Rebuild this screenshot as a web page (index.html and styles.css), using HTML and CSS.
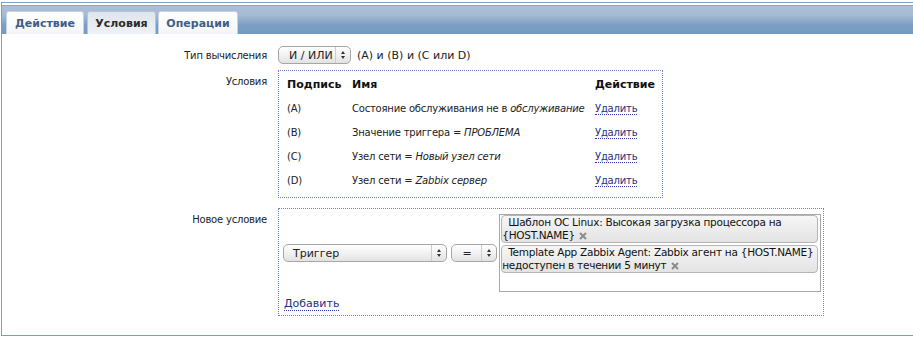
FILE: index.html
```html
<!DOCTYPE html>
<html lang="ru">
<head>
<meta charset="utf-8">
<link rel="stylesheet" href="styles.css">
</head>
<body>
<div class="frame">
  <div class="header">
    <div class="tabs">
      <div class="tab t1">Действие</div>
      <div class="tab t2 active">Условия</div>
      <div class="tab t3">Операции</div>
    </div>
  </div>
  <div class="form">
    <div class="row row-calc">
      <div class="label">Тип вычисления</div>
      <div class="value inline">
        <div class="select sel-calc"><span class="sel-text">И / ИЛИ</span><span class="sel-arrow"></span></div>
        <span class="formula">(A) и (B) и (C или D)</span>
      </div>
    </div>
    <div class="row row-cond">
      <div class="label">Условия</div>
      <div class="value">
        <div class="dotbox conds">
          <table class="ctable">
            <thead>
              <tr><th class="c1">Подпись</th><th class="c2">Имя</th><th class="c3">Действие</th></tr>
            </thead>
            <tbody>
              <tr><td>(A)</td><td>Состояние обслуживания не в <i>обслуживание</i></td><td><a class="link">Удалить</a></td></tr>
              <tr><td>(B)</td><td>Значение триггера = <i>ПРОБЛЕМА</i></td><td><a class="link">Удалить</a></td></tr>
              <tr><td>(C)</td><td>Узел сети = <i>Новый узел сети</i></td><td><a class="link">Удалить</a></td></tr>
              <tr><td>(D)</td><td>Узел сети = <i>Zabbix сервер</i></td><td><a class="link">Удалить</a></td></tr>
            </tbody>
          </table>
        </div>
      </div>
    </div>
    <div class="row row-new">
      <div class="label">Новое условие</div>
      <div class="value">
        <div class="dotbox newbox">
          <div class="newline">
            <div class="select sel-trig"><span class="sel-text">Триггер</span><span class="sel-arrow"></span></div>
            <div class="select sel-eq"><span class="sel-text eq">=</span><span class="sel-arrow"></span></div>
            <div class="multi">
              <div class="chip">Шаблон ОС Linux: Высокая загрузка процессора на {HOST.NAME} <svg class="x" width="8" height="8" viewBox="0 0 8 8"><path d="M1 1L7 7M7 1L1 7" stroke="#8c8c8c" stroke-width="2"/></svg></div>
              <div class="chip">Template App Zabbix Agent: Zabbix агент на {HOST.NAME} недоступен в течении 5 минут <svg class="x" width="8" height="8" viewBox="0 0 8 8"><path d="M1 1L7 7M7 1L1 7" stroke="#8c8c8c" stroke-width="2"/></svg></div>
            </div>
          </div>
          <div class="addline"><a class="link">Добавить</a></div>
        </div>
      </div>
    </div>
  </div>
</div>
</body>
</html>
```

FILE: styles.css
```css
* { box-sizing: border-box; }
body {
  margin: 0;
  background: #fff;
  font-family: "DejaVu Sans", Verdana, sans-serif;
  font-size: 10px;
  letter-spacing: -0.2px;
  color: #111;
}
.frame {
  margin: 2px 0 0 1px;
  width: 930px;
  height: 334px;
  border: 1px solid #7f9dc0;
  border-right: none;
}
.header {
  border-top: 2px solid #fff;
  height: 31px;
  background: linear-gradient(to bottom, #8ea8c6 0, #8ea8c6 1px, #abc0d7 1px, #a4bbd4 10px, #7c9fc4 20px, #749ac0 100%);
  padding: 5px 0 0 4px;
}
.tabs { display: flex; height: 100%; align-items: flex-end; }
.tab {
  height: 23px;
  display: flex;
  align-items: center;
  justify-content: center;
  font-weight: bold;
  font-size: 11px;
  letter-spacing: 0;
  color: #3f5f87;
  background: linear-gradient(to bottom, #ffffff, #f2f5f8);
  border: 1px solid #c5d3e2;
  border-bottom: none;
  border-radius: 3px 3px 0 0;
}
.t1 { width: 78px; }
.t2 { width: 69px; margin-left: 3px; }
.t3 { width: 80px; margin-left: 2px; }
.tab.active {
  color: #2b2b2b;
  background: linear-gradient(to bottom, #dfe5ec, #eef2f6);
  border-color: #b7c6d6;
}
.form { padding-top: 12px; }
.row { display: flex; }
.label {
  width: 265px;
  text-align: right;
  color: #222;
  flex: none;
}
.value { margin-left: 11px; }
.inline { display: flex; align-items: center; gap: 6px; }
.row-calc .label { padding-top: 4px; }
.row-cond { margin-top: 6px; }
.row-cond .label { padding-top: 6px; }
.row-new { margin-top: 10px; }
.row-new .label { padding-top: 6px; }

.select {
  display: flex;
  height: 18px;
  border: 1px solid #a6a6a6;
  border-radius: 5px;
  background: linear-gradient(to bottom, #ffffff 0, #f3f3f3 45%, #e2e2e2 100%);
  align-items: stretch;
  font-size: 11px;
  letter-spacing: 0;
  color: #222;
}
.sel-text { flex: 1; display: flex; align-items: center; padding-left: 9px; }
.sel-text.eq { padding-left: 10px; }
.sel-arrow {
  width: 15px;
  border-left: 1px solid #cdcdcd;
  position: relative;
}
.sel-arrow::before, .sel-arrow::after {
  content: "";
  position: absolute;
  left: 5px;
  border-left: 2.5px solid transparent;
  border-right: 2.5px solid transparent;
}
.sel-arrow::before { top: 4px; border-bottom: 3px solid #333; }
.sel-arrow::after { top: 9px; border-top: 3px solid #333; }
.sel-calc { width: 73px; }
.sel-calc .sel-text { padding-left: 10px; }
.formula { font-size: 11px; letter-spacing: 0; color: #222; }

.dotbox { border: 1px dotted #7084c2; }
.conds { width: 385px; padding: 1px 7px 5px 8px; }
.ctable { border-collapse: collapse; width: 100%; }
.ctable th {
  text-align: left;
  font-weight: bold;
  font-size: 11px;
  letter-spacing: 0;
  color: #111;
  height: 24px;
  padding: 0;
}
.ctable td { height: 24px; padding: 0; color: #222; }
.ctable .c1 { width: 65px; }
.ctable .c3 { width: 60px; }
.link {
  color: #262f86;
  text-decoration: none;
  border-bottom: 1px dotted #2b36a8;
}

.newbox { width: 546px; padding: 5px 2px 5px 4px; }
.newline { display: flex; align-items: center; gap: 4px; }
.sel-trig { width: 165px; }
.sel-eq { width: 46px; }
.multi {
  margin-left: -2px;
  width: 323px;
  height: 78px;
  border: 1px solid #a8a8a8;
  padding: 0 1px;
}
.chip {
  border: 1px solid #b5b5b5;
  border-radius: 4px;
  background: linear-gradient(to bottom, #f6f6f6, #e3e3e3);
  text-indent: 6px;
  line-height: 13px;
  height: 28px;
  font-size: 10.5px;
  letter-spacing: -0.25px;
  color: #111;
  margin-bottom: 2px;
  margin-right: 1px;
}
.x { display: inline; vertical-align: -0.5px; margin-left: 1px; }
.addline { padding: 5px 0 0 1px; font-size: 11px; letter-spacing: 0; }
```
